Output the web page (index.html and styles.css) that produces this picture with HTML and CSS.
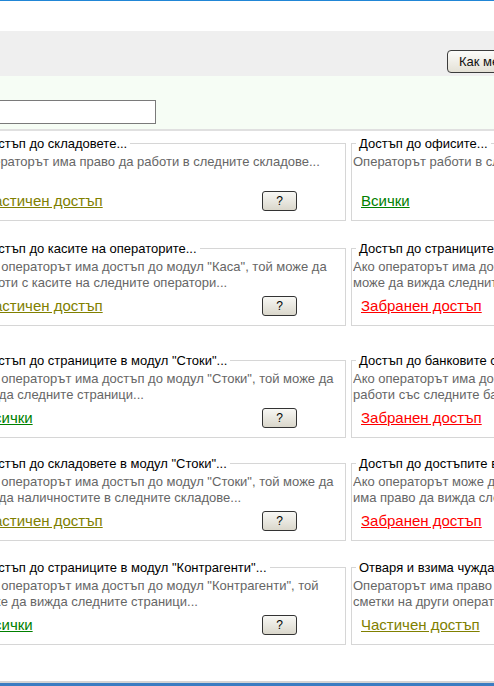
FILE: index.html
```html
<!DOCTYPE html>
<html lang="bg">
<head>
<meta charset="utf-8">
<title>Права на оператора</title>
<link rel="stylesheet" href="styles.css">
</head>
<body>
<div class="page">
  <div class="topline"></div>
  <div class="header"></div>
  <div class="toolbar">
    <button class="btn" type="button">Как ме виждат другите</button>
  </div>
  <div class="filter">
    <input class="search" type="text">
  </div>

  <div class="rows">
    <div class="row r1">
      <fieldset class="perm">
        <legend>Достъп до складовете...</legend>
        <div class="desc">Операторът има право да работи в следните складове...</div>
        <div class="act"><a class="link partial" href="#">Частичен достъп</a><button class="qbtn" type="button">?</button></div>
      </fieldset>
      <fieldset class="perm">
        <legend>Достъп до офисите...</legend>
        <div class="desc">Операторът работи в следните офиси...</div>
        <div class="act"><a class="link all" href="#">Всички</a><button class="qbtn" type="button">?</button></div>
      </fieldset>
    </div>

    <div class="row r2">
      <fieldset class="perm">
        <legend>Достъп до касите на операторите...</legend>
        <div class="desc">Ако операторът има достъп до модул "Каса", той може да работи с касите на следните оператори...</div>
        <div class="act"><a class="link partial" href="#">Частичен достъп</a><button class="qbtn" type="button">?</button></div>
      </fieldset>
      <fieldset class="perm">
        <legend>Достъп до страниците в модул "Каса"...</legend>
        <div class="desc">Ако операторът има достъп до модул "Каса", той<br>може да вижда следните страници...</div>
        <div class="act"><a class="link denied" href="#">Забранен достъп</a><button class="qbtn" type="button">?</button></div>
      </fieldset>
    </div>

    <div class="row r3">
      <fieldset class="perm">
        <legend>Достъп до страниците в модул "Стоки"...</legend>
        <div class="desc">Ако операторът има достъп до модул "Стоки", той може да вижда следните страници...</div>
        <div class="act"><a class="link all" href="#">Всички</a><button class="qbtn" type="button">?</button></div>
      </fieldset>
      <fieldset class="perm">
        <legend>Достъп до банковите сметки...</legend>
        <div class="desc">Ако операторът има достъп до модул "Банка", той може да<br>работи със следните банкови сметки...</div>
        <div class="act"><a class="link denied" href="#">Забранен достъп</a><button class="qbtn" type="button">?</button></div>
      </fieldset>
    </div>

    <div class="row r4">
      <fieldset class="perm">
        <legend>Достъп до складовете в модул "Стоки"...</legend>
        <div class="desc">Ако операторът има достъп до модул "Стоки", той може да вижда наличностите в следните складове...</div>
        <div class="act"><a class="link partial" href="#">Частичен достъп</a><button class="qbtn" type="button">?</button></div>
      </fieldset>
      <fieldset class="perm">
        <legend>Достъп до достъпите в модул "Достъп"...</legend>
        <div class="desc">Ако операторът може да отваря модул "Достъп", той<br>има право да вижда следните оператори...</div>
        <div class="act"><a class="link denied" href="#">Забранен достъп</a><button class="qbtn" type="button">?</button></div>
      </fieldset>
    </div>

    <div class="row r5">
      <fieldset class="perm">
        <legend>Достъп до страниците в модул "Контрагенти"...</legend>
        <div class="desc">Ако операторът има достъп до модул "Контрагенти", той може да вижда следните страници...</div>
        <div class="act"><a class="link all" href="#">Всички</a><button class="qbtn" type="button">?</button></div>
      </fieldset>
      <fieldset class="perm">
        <legend>Отваря и взима чужда сметка...</legend>
        <div class="desc">Операторът има право да отваря и взима<br>сметки на други оператори...</div>
        <div class="act"><a class="link partial" href="#">Частичен достъп</a><button class="qbtn" type="button">?</button></div>
      </fieldset>
    </div>
  </div>

  <div class="footer"></div>
</div>
</body>
</html>
```

FILE: styles.css
```css
html, body {
  margin: 0;
  padding: 0;
  height: 100%;
}

body {
  overflow: hidden;
  background: #ffffff;
  font-family: "Liberation Sans", Arial, sans-serif;
  color: #000;
}

.page {
  margin-left: -26px;
  width: 1200px;
  min-height: 100vh;
  display: flex;
  flex-direction: column;
}

.topline {
  height: 1px;
  background: #2186d6;
}

.header {
  height: 30px;
}

.toolbar {
  height: 45px;
  box-sizing: border-box;
  background: #efefef;
  display: flex;
  align-items: flex-end;
  padding-left: 473px;
  padding-bottom: 3px;
}

.btn {
  height: 23px;
  box-sizing: border-box;
  padding: 0 11px;
  border: 1px solid #3c3c3c;
  border-radius: 4px;
  background: linear-gradient(#fcfcfa, #e4e1d6);
  font-family: "Liberation Sans", Arial, sans-serif;
  font-size: 13px;
  color: #111;
  white-space: nowrap;
}

.filter {
  height: 55px;
  box-sizing: border-box;
  padding-top: 24px;
  background: #f6fdf5;
  border-bottom: 2px solid #e0e0e0;
}

.search {
  display: block;
  width: 182px;
  height: 24px;
  box-sizing: border-box;
  margin: 0;
  border: 1px solid #7a7a7a;
  background: #fff;
}

.rows {
  display: flex;
  flex-direction: column;
}

.row {
  display: grid;
  grid-template-columns: 372px 372px;
  column-gap: 5px;
}

.r1 { margin-top: 5px; }
.r2 { margin-top: 20px; }
.r3 { margin-top: 27px; }
.r4 { margin-top: 18px; }
.r5 { margin-top: 19px; }

.perm {
  margin: 0;
  min-width: 0;
  border: 1px solid #d6d6d6;
  padding: 0 1px 9px;
}

.perm legend {
  margin-left: 3px;
  padding: 0 3px;
  font-size: 13px;
  line-height: 15px;
  color: #000;
  white-space: nowrap;
}

.desc {
  margin-top: 3px;
  height: 32px;
  overflow: hidden;
  font-size: 13px;
  line-height: 16px;
  color: #666666;
  white-space: normal;
}

.act {
  margin-top: 5px;
  height: 20px;
  display: flex;
  align-items: center;
  justify-content: space-between;
  padding-left: 8px;
  padding-right: 47px;
}

.link {
  font-size: 15px;
  line-height: 18px;
  text-decoration: underline;
}

.partial { color: #808000; }
.all { color: #008000; }
.denied { color: #ff0000; }

.qbtn {
  width: 35px;
  height: 20px;
  box-sizing: border-box;
  padding: 0;
  border: 1px solid #333333;
  border-radius: 3px;
  background: linear-gradient(#f8f8f5, #dad7cb);
  font-family: "Liberation Sans", Arial, sans-serif;
  font-size: 12px;
  color: #000;
}

.footer {
  margin-top: auto;
  height: 5px;
  border-top: 2px solid #d4d4d4;
  background: #3a7cc2;
  box-sizing: border-box;
}
```
